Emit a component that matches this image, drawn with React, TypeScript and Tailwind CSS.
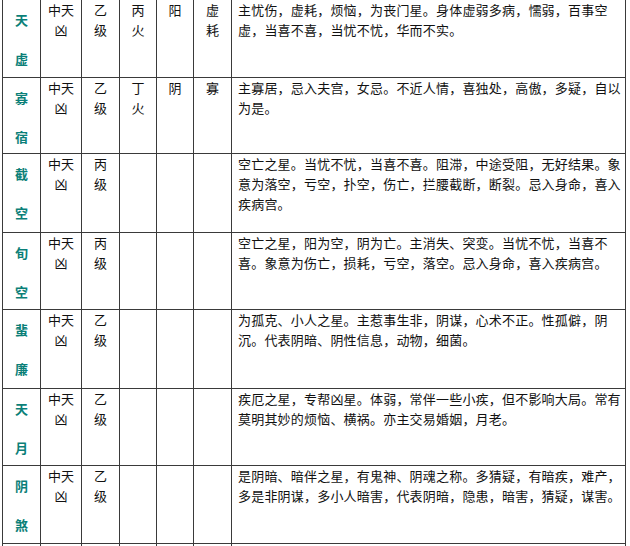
const ROWS = [
  {
    name: ['天', '虚'],
    luck: ['中天', '凶'],
    grade: ['乙', '级'],
    wx: ['丙', '火'],
    yy: '阳',
    hua: ['虚', '耗'],
    h: 'h-[78px]',
    desc: ['主忧伤，虚耗，烦恼，为丧门星。身体虚弱多病，懦弱，百事空', '虚，当喜不喜，当忧不忧，华而不实。'],
  },
  {
    name: ['寡', '宿'],
    luck: ['中天', '凶'],
    grade: ['乙', '级'],
    wx: ['丁', '火'],
    yy: '阴',
    hua: ['寡'],
    h: 'h-[76px]',
    desc: ['主寡居，忌入夫宫，女忌。不近人情，喜独处，高傲，多疑，自以', '为是。'],
  },
  {
    name: ['截', '空'],
    luck: ['中天', '凶'],
    grade: ['丙', '级'],
    wx: [],
    yy: '',
    hua: [],
    h: 'h-[79px]',
    desc: [
      '空亡之星。当忧不忧，当喜不喜。阻滞，中途受阻，无好结果。象',
      '意为落空，亏空，扑空，伤亡，拦腰截断，断裂。忌入身命，喜入',
      '疾病宫。',
    ],
  },
  {
    name: ['旬', '空'],
    luck: ['中天', '凶'],
    grade: ['丙', '级'],
    wx: [],
    yy: '',
    hua: [],
    h: 'h-[77px]',
    desc: ['空亡之星，阳为空，阴为亡。主消失、突变。当忧不忧，当喜不', '喜。象意为伤亡，损耗，亏空，落空。忌入身命，喜入疾病宫。'],
  },
  {
    name: ['蜚', '廉'],
    luck: ['中天', '凶'],
    grade: ['乙', '级'],
    wx: [],
    yy: '',
    hua: [],
    h: 'h-[79px]',
    desc: ['为孤克、小人之星。主惹事生非，阴谋，心术不正。性孤僻，阴', '沉。代表阴暗、阴性信息，动物，细菌。'],
  },
  {
    name: ['天', '月'],
    luck: ['中天', '凶'],
    grade: ['乙', '级'],
    wx: [],
    yy: '',
    hua: [],
    h: 'h-[77px]',
    desc: ['疾厄之星，专帮凶星。体弱，常伴一些小疾，但不影响大局。常有', '莫明其妙的烦恼、横祸。亦主交易婚姻，月老。'],
  },
  {
    name: ['阴', '煞'],
    luck: ['中天', '凶'],
    grade: ['乙', '级'],
    wx: [],
    yy: '',
    hua: [],
    h: 'h-[78px]',
    desc: ['是阴暗、暗伴之星，有鬼神、阴魂之称。多猜疑，有暗疾，难产，', '多是非阴谋，多小人暗害，代表阴暗，隐患，暗害，猜疑，谋害。'],
  },
];

function Lines({ items }: { items: string[] }) {
  return (
    <>
      {items.map((t, i) => (
        <div key={i}>{t}</div>
      ))}
    </>
  );
}

const cell = 'border-r border-[#3a3a3a] text-center leading-[20px]';

export default function App() {
  return (
    <div className="min-h-screen bg-white overflow-hidden">
      <div
        className="ml-[2px] w-[624px] border-l border-[#3a3a3a] text-[13px] text-[#111]"
        style={{ fontFamily: '"Noto Sans CJK SC", "Noto Sans", sans-serif' }}
      >
        {[...ROWS, { ...ROWS[6], desc: [], name: [], luck: [], grade: [], h: 'h-[10px]' }].map((r, i) => (
          <div
            key={i}
            className={`grid grid-cols-[38px_41px_38px_37px_37px_38px_1fr] border-b border-[#3a3a3a] ${r.h}`}
          >
            <div className="border-r border-[#3a3a3a] text-center text-[13px] font-bold leading-[39px] text-[#0b7f78]">
              <Lines items={r.name} />
            </div>
            <div className={cell}>
              <Lines items={r.luck} />
            </div>
            <div className={cell}>
              <Lines items={r.grade} />
            </div>
            <div className={cell}>
              <Lines items={r.desc.length ? r.wx : []} />
            </div>
            <div className={cell}>{r.desc.length ? r.yy : ''}</div>
            <div className={cell}>
              <Lines items={r.desc.length ? r.hua : []} />
            </div>
            <div className="border-r border-[#3a3a3a] pl-[6px] leading-[20px] whitespace-nowrap tracking-[0.2px]">
              <Lines items={r.desc} />
            </div>
          </div>
        ))}
      </div>
    </div>
  );
}
